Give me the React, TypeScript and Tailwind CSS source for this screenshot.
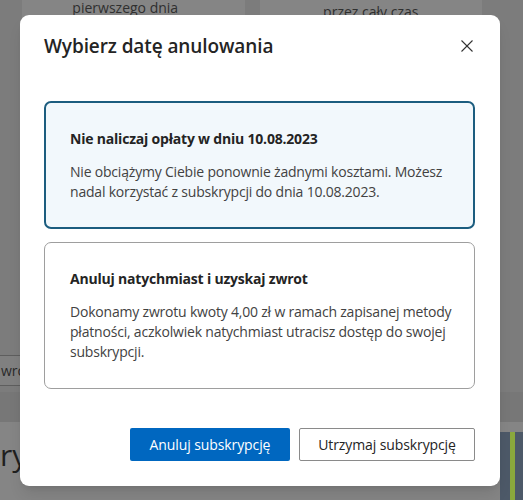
import React from "react";

const font = { fontFamily: '"Segoe UI", "Open Sans", "Noto Sans", sans-serif' };

// background page (dimmed behind the modal)
const Backdrop: React.FC = () => (
  <div className="h-[500px] w-full overflow-hidden bg-[#7c7c7c]">
    <div className="flex gap-[15px] pl-[22px] pr-[41px]">
      <div className="h-[322px] flex-1 rounded-b-md bg-[#858585] text-center text-[14px] leading-[16px] text-[#2f2f2f]">
        <span className="ml-[-16px]">pierwszego dnia</span>
      </div>
      <div className="h-[322px] flex-1 rounded-b-md bg-[#858585] pt-[3px] text-center text-[14px] leading-[18px] text-[#2f2f2f]">
        przez cały czas
      </div>
    </div>
    <div className="mt-[33px] flex h-[31px] w-[120px] items-center border-y border-[#5e5e5e] bg-[#808080] pl-[1px] text-[14px] text-[#2a2a2a]">
      wró
    </div>
    <div className="mt-[6px] h-[30px] bg-[#777777]" />
    <div className="flex h-[80px] bg-[#858585]">
      <div className="flex-1 pt-[10px] text-[30px] text-[#1f1f1f]">ryp</div>
      <div className="mt-[10px] w-[23px] bg-[#4d5968]">
        <div className="ml-[10px] h-full w-[5px] bg-[#8aa83c]" />
      </div>
    </div>
  </div>
);

const Option: React.FC<{
  title: string;
  body: string;
  selected?: boolean;
}> = ({ title, body, selected }) => (
  <div
    className={
      selected
        ? "rounded-[7px] border-2 border-[#1c5d7f] bg-[#f2f8fc] pb-[25px] pl-[24px] pr-[12px] pt-[26px]"
        : "rounded-[7px] border border-[#9e9e9e] bg-white pb-[26px] pl-[25px] pr-[13px] pt-[26px]"
    }
  >
    <p className="text-[14px] font-bold leading-[20px] tracking-[-0.2px] text-[#242424]">{title}</p>
    <p className="mt-[13px] text-[14px] leading-[20px] tracking-[-0.2px] text-[#424242]">{body}</p>
  </div>
);

export default function App() {
  return (
    <div className="relative h-[500px] w-full overflow-hidden" style={font}>
      <Backdrop />

      {/* modal */}
      <div className="absolute left-[20px] top-[15px] w-[480px] rounded-[9px] bg-white pb-[25px] pl-[24px] pr-[25px] pt-[17px] shadow-lg">
        <div className="flex items-center justify-between">
          <h2 className="text-[19px] font-semibold leading-[28px] tracking-[-0.1px] text-[#242424]">
            Wybierz datę anulowania
          </h2>
          <button type="button" className="mr-[2px] text-[#333]">
            <svg viewBox="0 0 12 12" className="h-[12px] w-[12px]" fill="none" stroke="currentColor" strokeWidth="1.1">
              <line x1="0.5" y1="0.5" x2="11.5" y2="11.5" />
              <line x1="11.5" y1="0.5" x2="0.5" y2="11.5" />
            </svg>
          </button>
        </div>

        <div className="mt-[41px] flex flex-col gap-[13px]">
          <Option
            selected
            title="Nie naliczaj opłaty w dniu 10.08.2023"
            body="Nie obciążymy Ciebie ponownie żadnymi kosztami. Możesz nadal korzystać z subskrypcji do dnia 10.08.2023."
          />
          <Option
            title="Anuluj natychmiast i uzyskaj zwrot"
            body="Dokonamy zwrotu kwoty 4,00 zł w ramach zapisanej metody płatności, aczkolwiek natychmiast utracisz dostęp do swojej subskrypcji."
          />
        </div>

        <div className="mt-[39px] flex justify-end gap-[9px]">
          <button
            type="button"
            className="h-[33px] w-[160px] rounded-[2px] bg-[#0067c0] text-[14px] tracking-[-0.1px] text-white"
          >
            Anuluj subskrypcję
          </button>
          <button
            type="button"
            className="h-[33px] w-[176px] rounded-[2px] border border-[#8a8a8a] bg-white text-[14px] tracking-[-0.1px] text-[#242424]"
          >
            Utrzymaj subskrypcję
          </button>
        </div>
      </div>
    </div>
  );
}
